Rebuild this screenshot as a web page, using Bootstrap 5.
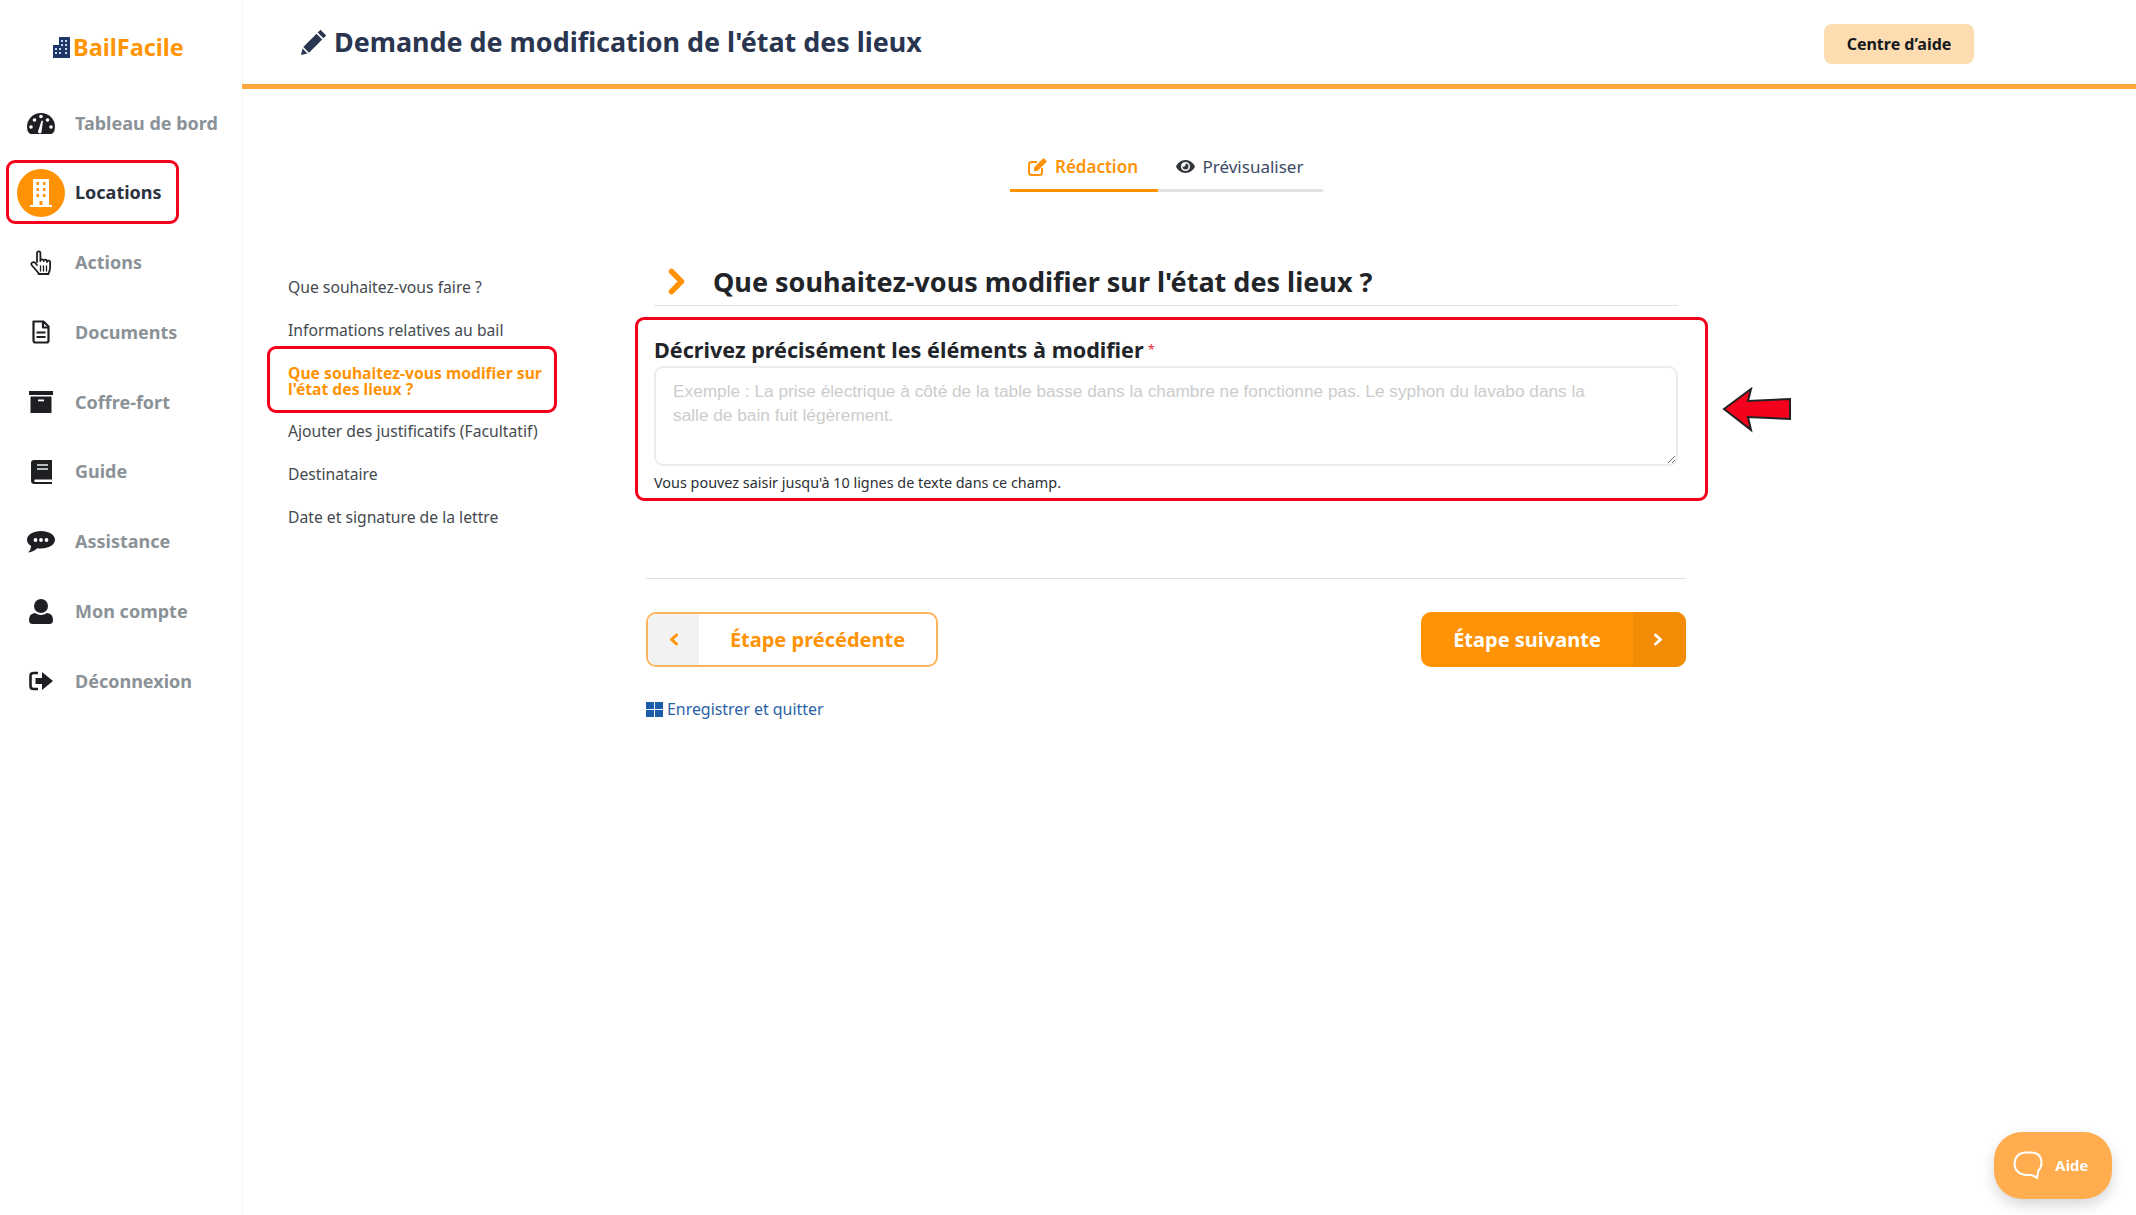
<!DOCTYPE html>
<html lang="fr">
<head>
    <meta charset="UTF-8">
    <title>BailFacile</title>
    <link href="https://cdn.jsdelivr.net/npm/bootstrap@5.3.0/dist/css/bootstrap.min.css" rel="stylesheet">
    <style>
        body { font-family: "Noto Sans", "Open Sans", sans-serif; color: #212529; background: #fff; }
        .side-col { width: 242px; flex: 0 0 242px; box-shadow: 1px 0 0 #f6f6f6; min-height: 100vh; }
        .brand-row { height: 94px; margin-bottom: 5px; padding-left: 53px; }
        .brand-name { color: #ff9505; font-size: 23.5px; font-weight: 700; line-height: 30px; margin-left: 3px; }
        .side-link { height: 48px; margin-bottom: 21.8px; padding: 0 0 0 17px; color: #8b9297; font-size: 18px; font-weight: 700; position: relative; text-decoration: none; }
        .side-link.current { color: #2b3240; }
        .side-link.current::after, .step-link.current::after, .field-zone::after {
            content: ""; position: absolute; border: 3px solid #f4001c; border-radius: 9px; pointer-events: none;
        }
        .side-link.current::after { left: 6px; top: -9px; width: 173px; height: 64px; }
        .side-ico { width: 48px; height: 48px; flex: 0 0 48px; margin-right: 10px; }
        .loc-round { background: #ff9305; border-radius: 50%; }
        .top-bar { height: 89px; border-bottom: 5px solid #ffa63f; padding: 0 162px 0 59px; }
        .top-title { font-size: 26.9px; font-weight: 700; color: #2a3650; margin: 0 0 1px 7px; line-height: 38px; }
        .help-btn { width: 150px; height: 40px; background: #fddcb2; color: #15191d; font-size: 16px; font-weight: 700; border: 0; border-radius: 8px; margin-top: 3px; padding: 0; }
        .tabs-row { margin: 51px 0 0 768px; }
        .tab-item { height: 52px; font-size: 17px; border-bottom: 3px solid #e2e2e2; color: #3c4a66; padding-top: 4px; }
        .tab-item.active-tab { width: 148px; color: #ff9305; font-weight: 600; border-bottom-color: #ff9305; padding-right: 2px; }
        .tab-item.other-tab { width: 165px; padding-right: 2px; }
        .body-row { margin: 71px 0 0 46px; }
        .step-col { width: 265px; flex: 0 0 265px; padding-top: 13.5px; gap: 22px; }
        .step-link { font-size: 15.7px; line-height: 21px; color: #444a50; position: relative; display: block; text-decoration: none; }
        .step-link.current { color: #ff9305; font-weight: 700; line-height: 16px; margin-top: 2px; margin-bottom: 2px; }
        .step-link.current::after { left: -21px; top: -19px; width: 290px; height: 67px; }
        .form-col { width: 1040px; flex: 0 0 1040px; margin-left: 93px; }
        .q-head { margin: 0 8px; padding: 0 0 5px 14px; border-bottom: 1px solid #e3e3e3; height: 43px; }
        .q-title { font-size: 27px; font-weight: 700; color: #212529; line-height: 38px; margin: 0 0 0 27px; }
        .field-zone { position: relative; margin: 28px 8px 0; }
        .field-zone::after { left: -19px; top: -17px; width: 1073px; height: 184px; }
        .field-label { font-size: 21.6px; font-weight: 700; line-height: 30px; padding-top: 1px; margin: 0 0 1px; color: #212529; }
        .req-star { color: #e8323c; font-size: 13px; font-weight: 400; line-height: 1; vertical-align: 4px; margin-left: 4px; }
        .field-area { height: 100px; border: 2px solid #ececec; border-radius: 9px; padding: 12px 70px 12px 17px; font-family: "Liberation Sans", Arial, sans-serif; font-size: 17.25px; line-height: 23.5px; }
        .field-area::placeholder { color: #cccccc; opacity: 1; }
        .field-hint { font-size: 14.4px; line-height: 20px; margin-top: 7px; color: #2b2f33; }
        .split-line { margin: 85px 0 0; border-top: 1px solid #dfdfdf; opacity: 1; }
        .nav-btns { margin-top: 33px; }
        .prev-btn, .next-btn { height: 55px; font-size: 20px; font-weight: 700; padding: 0; border-radius: 10px; overflow: hidden; }
        .prev-btn { width: 292px; border: 2px solid #ffb45c; background: #fff; color: #ff9305; }
        .prev-ico { width: 51px; background: #f2f2f2; }
        .next-btn { width: 265px; border: 0; background: #ff9305; color: #fff; }
        .next-ico { width: 53px; background: #f28c06; padding-right: 3px; }
        .save-link { margin-top: 30px; color: #2a62a8; font-size: 15.9px; line-height: 24px; text-decoration: none; }
        .aide-btn { position: fixed; left: 1994px; top: 1132px; width: 118px; height: 67px; border: 0; border-radius: 28px; background: #ffad4f; color: #fff; font-size: 15px; font-weight: 700; box-shadow: 0 6px 14px rgba(0, 0, 0, .16); padding: 0 0 0 19px; gap: 12px; }
        .red-arrow { position: absolute; left: 1722px; top: 387px; }
    </style>
</head>
<body>

<div class="d-flex">
    <!-- Sidebar -->
    <div class="side-col">
        <div class="brand-row d-flex align-items-center">
            <svg width="17" height="21" viewBox="0 0 17 21"><path fill="#1c3768" d="M0 8h6V0h11v21H0z"/><g fill="#c9d6ec"><rect x="2" y="11" width="2" height="2"/><rect x="2" y="15" width="2" height="2"/><rect x="6" y="11" width="2" height="2"/><rect x="6" y="15" width="2" height="2"/><rect x="8" y="3" width="2" height="2"/><rect x="8" y="7" width="2" height="2"/><rect x="12" y="3" width="2" height="2"/><rect x="12" y="7" width="2" height="2"/><rect x="12" y="11" width="2" height="2"/><rect x="12" y="15" width="2" height="2"/></g></svg>
            <span class="brand-name">BailFacile</span>
        </div>
        <nav class="nav flex-column">
            <a class="side-link d-flex align-items-center" href="#">
                <span class="side-ico d-flex align-items-center justify-content-center"><svg width="28" height="22" viewBox="0 0 28 22"><path fill="#1d1f22" d="M0 15a14 14 0 0 1 28 0q0 4-2 6q-1 1-2 1H4q-1 0-2-1q-2-2-2-6z"/><g fill="#fff"><circle cx="4" cy="15" r="1.8"/><circle cx="7.5" cy="8" r="1.8"/><circle cx="14" cy="4.5" r="1.8"/><circle cx="20.5" cy="8" r="1.8"/><circle cx="24" cy="15" r="1.8"/><path d="M11 19.5l3.6-11 1.4.4-1.6 11.5a1.8 1.8 0 0 1-3.4-.9z"/></g></svg></span>
                Tableau de bord
            </a>
            <a class="side-link current d-flex align-items-center" href="#">
                <span class="side-ico loc-round d-flex align-items-center justify-content-center"><svg width="22" height="28" viewBox="0 0 22 28"><path fill="#fff" d="M3 0h16v26h3v2H0v-2h3z"/><g fill="#ff9305"><rect x="6.5" y="3" width="2.5" height="3"/><rect x="13" y="3" width="2.5" height="3"/><rect x="6.5" y="9" width="2.5" height="3"/><rect x="13" y="9" width="2.5" height="3"/><rect x="6.5" y="15" width="2.5" height="3"/><rect x="13" y="15" width="2.5" height="3"/><rect x="9.5" y="22" width="3" height="4"/></g></svg></span>
                Locations
            </a>
            <a class="side-link d-flex align-items-center" href="#">
                <span class="side-ico d-flex align-items-center justify-content-center"><svg width="22" height="25" viewBox="0 0 22 25" fill="none" stroke="#1d1f22" stroke-width="1.8" stroke-linejoin="round" stroke-linecap="round"><path d="M7 12V3a1.7 1.7 0 0 1 3.4 0v8M10.4 10.5a1.7 1.7 0 0 1 3.3.5M13.7 11a1.6 1.6 0 0 1 3.2.5M16.9 12a1.6 1.6 0 0 1 3.2.5v5q0 3-1.5 5.5v1H8.5v-1L2 15.5q-1.5-2 .3-3t3 .5L7 15"/><path stroke-width="1.3" d="M10.5 16v5M13.5 16v5M16.5 16v5"/></svg></span>
                Actions
            </a>
            <a class="side-link d-flex align-items-center" href="#">
                <span class="side-ico d-flex align-items-center justify-content-center"><svg width="18" height="24" viewBox="0 0 18 24" fill="none" stroke="#1d1f22" stroke-width="2.2" stroke-linejoin="round"><path d="M1.5 1.5h10l5 5v14q0 2-2 2h-11q-2 0-2-2z"/><path d="M11 1.5v6h5.5M4.5 12.5h9M4.5 17h9"/></svg></span>
                Documents
            </a>
            <a class="side-link d-flex align-items-center" href="#">
                <span class="side-ico d-flex align-items-center justify-content-center"><svg width="24" height="22" viewBox="0 0 24 22"><path fill="#1d1f22" d="M0 0h24v4H0zM1.5 5.5h21V22h-21z"/><rect x="9" y="8.5" width="6" height="1.8" fill="#fff"/></svg></span>
                Coffre-fort
            </a>
            <a class="side-link d-flex align-items-center" href="#">
                <span class="side-ico d-flex align-items-center justify-content-center"><svg width="21" height="24" viewBox="0 0 21 24"><path fill="#1d1f22" d="M3 0h18v19.5H4a1.5 1.5 0 0 0 0 2.5h17v2H3.5Q0 24 0 20.5V3q0-3 3-3z"/><path fill="#b9bcbf" d="M6 4h11v2H6zM6 8h11v2H6z"/></svg></span>
                Guide
            </a>
            <a class="side-link d-flex align-items-center" href="#">
                <span class="side-ico d-flex align-items-center justify-content-center"><svg width="28" height="22" viewBox="0 0 28 22"><path fill="#1d1f22" d="M14 0c7.7 0 14 3.8 14 8.7S21.7 17.5 14 17.5q-2 0-3.8-.3Q7 20.5 1 21.5q3-2.5 3.2-6.5Q0 12.5 0 8.7C0 3.8 6.3 0 14 0z"/><g fill="#fff"><circle cx="8.5" cy="9" r="1.9"/><circle cx="14" cy="9" r="1.9"/><circle cx="19.5" cy="9" r="1.9"/></g></svg></span>
                Assistance
            </a>
            <a class="side-link d-flex align-items-center" href="#">
                <span class="side-ico d-flex align-items-center justify-content-center"><svg width="24" height="25" viewBox="0 0 24 25"><circle cx="12" cy="7" r="7" fill="#1d1f22"/><path fill="#1d1f22" d="M0 21q0-6.5 6-7 3 2 6 2t6-2q6 .5 6 7 0 4-3.5 4h-17Q0 25 0 21z"/></svg></span>
                Mon compte
            </a>
            <a class="side-link d-flex align-items-center" href="#">
                <span class="side-ico d-flex align-items-center justify-content-center"><svg width="24" height="20" viewBox="0 0 24 20"><path fill="none" stroke="#1d1f22" stroke-width="2.6" d="M9 2H4.5Q1.5 2 1.5 5v10q0 3 3 3H9"/><path fill="#1d1f22" d="M6.5 7H13V1l11 9-11 9v-6H6.5z"/></svg></span>
                Déconnexion
            </a>
        </nav>
    </div>

    <!-- Main -->
    <div class="flex-grow-1 position-relative">
        <div class="top-bar d-flex align-items-center justify-content-between">
            <div class="d-flex align-items-center">
                <svg width="26" height="26" viewBox="0 0 26 26"><path fill="#2a3650" d="M19.5.8l5.7 5.7-2.8 2.8-5.7-5.7zM15.5 4.8l5.7 5.7L8 23.7l-5.7-5.7zM1.5 19.5l5 5L0 26z"/></svg>
                <h1 class="top-title">Demande de modification de l'état des lieux</h1>
            </div>
            <button class="help-btn btn">Centre d’aide</button>
        </div>

        <div class="tabs-row d-flex">
            <div class="tab-item active-tab d-flex align-items-center justify-content-center gap-2">
                <svg width="19" height="18" viewBox="0 0 19 18"><path fill="none" stroke="#ff9305" stroke-width="2" d="M14 10v4.5q0 2.5-2.5 2.5h-8Q1 17 1 14.5v-8Q1 4 3.5 4H9"/><path fill="#ff9305" d="M15.5 0L19 3.5 9.5 13H6V9.5z"/></svg>
                Rédaction
            </div>
            <div class="tab-item other-tab d-flex align-items-center justify-content-center gap-2">
                <svg width="19" height="13" viewBox="0 0 19 13"><path fill="#33373b" fill-rule="evenodd" d="M9.5 0C14 0 17.5 3 19 6.5 17.5 10 14 13 9.5 13S1.5 10 0 6.5C1.5 3 5 0 9.5 0zm0 2a4.5 4.5 0 1 0 0 9 4.5 4.5 0 0 0 0-9zm0 1.5a3 3 0 1 1-3 3q1.5.5 2.500-.5t.5-2.5z"/></svg>
                Prévisualiser
            </div>
        </div>

        <div class="body-row d-flex">
            <div class="step-col d-flex flex-column">
                <a class="step-link" href="#">Que souhaitez-vous faire ?</a>
                <a class="step-link" href="#">Informations relatives au bail</a>
                <a class="step-link current" href="#">Que souhaitez-vous modifier sur l'état des lieux ?</a>
                <a class="step-link" href="#">Ajouter des justificatifs (Facultatif)</a>
                <a class="step-link" href="#">Destinataire</a>
                <a class="step-link" href="#">Date et signature de la lettre</a>
            </div>

            <div class="form-col">
                <div class="q-head d-flex align-items-center">
                    <svg width="18" height="27" viewBox="0 0 18 27"><path fill="none" stroke="#ff9305" stroke-width="5.5" stroke-linecap="round" stroke-linejoin="round" d="M3.5 3.5l10 10-10 10"/></svg>
                    <h2 class="q-title">Que souhaitez-vous modifier sur l'état des lieux ?</h2>
                </div>
                <div class="field-zone">
                    <label class="field-label d-block" for="descr">Décrivez précisément les éléments à modifier<span class="req-star">*</span></label>
                    <textarea id="descr" class="form-control field-area" placeholder="Exemple : La prise électrique à côté de la table basse dans la chambre ne fonctionne pas. Le syphon du lavabo dans la salle de bain fuit légèrement."></textarea>
                    <div class="field-hint">Vous pouvez saisir jusqu'à 10 lignes de texte dans ce champ.</div>
                </div>
                <hr class="split-line">
                <div class="nav-btns d-flex justify-content-between">
                    <button class="btn prev-btn d-flex align-items-stretch">
                        <span class="prev-ico d-flex align-items-center justify-content-center"><svg width="10" height="13" viewBox="0 0 10 13"><path fill="none" stroke="#ff9305" stroke-width="3" stroke-linecap="round" stroke-linejoin="round" d="M7.5 2l-5 4.5 5 4.5"/></svg></span>
                        <span class="flex-grow-1 d-flex align-items-center justify-content-center">Étape précédente</span>
                    </button>
                    <button class="btn next-btn d-flex align-items-stretch">
                        <span class="flex-grow-1 d-flex align-items-center justify-content-center">Étape suivante</span>
                        <span class="next-ico d-flex align-items-center justify-content-center"><svg width="10" height="13" viewBox="0 0 10 13"><path fill="none" stroke="#fff" stroke-width="3" stroke-linecap="round" stroke-linejoin="round" d="M2.5 2l5 4.5-5 4.5"/></svg></span>
                    </button>
                </div>
                <a class="save-link d-inline-flex align-items-center gap-1" href="#">
                    <svg width="17" height="15" viewBox="0 0 17 15"><path fill="#1a5ca8" d="M0 0h8v7H0zM9 0h8v7H9zM0 8h8v7H0zM9 8h8v7H9z"/></svg>
                    Enregistrer et quitter
                </a>
            </div>
        </div>
    </div>
</div>

<svg class="red-arrow" width="70" height="46" viewBox="0 0 70 46"><path fill="#f4001c" stroke="#222" stroke-width="2" d="M2 22L29 2l-3 12 42-2v20l-42-2 3 13z"/></svg>

<button class="aide-btn d-flex align-items-center">
    <svg width="30" height="29" viewBox="0 0 30 29"><path fill="none" stroke="#fff" stroke-width="2" stroke-linejoin="round" d="M13 1.5h5q10 0 10.5 10 0 5-3 8-1 4-1.5 7.5-3-2.5-6-3H13q-11-1-11.5-11.5Q2 2 13 1.5z"/></svg>
    Aide
</button>

<script src="https://cdn.jsdelivr.net/npm/bootstrap@5.3.0/dist/js/bootstrap.bundle.min.js"></script>
</body>
</html>
